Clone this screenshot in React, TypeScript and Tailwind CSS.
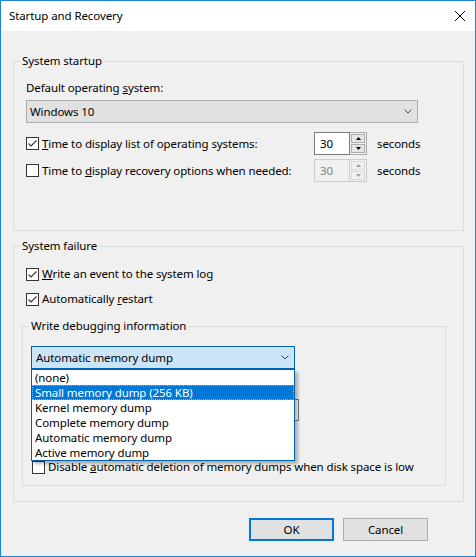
import React from "react";

const Check = ({ checked = false, className = "" }: { checked?: boolean; className?: string }) => (
  <span
    className={`flex h-[13px] w-[13px] shrink-0 items-center justify-center border border-[#333333] bg-white ${className}`}
  >
    {checked && (
      <svg width="11" height="11" viewBox="0 0 11 11">
        <path d="M1.5 5.5 L4 8 L9.5 2.5" fill="none" stroke="#333333" strokeWidth="1.1" />
      </svg>
    )}
  </span>
);

const Chevron = () => (
  <svg width="8" height="5" viewBox="0 0 8 5">
    <path d="M0.5 0.5 L4 4 L7.5 0.5" fill="none" stroke="#404040" strokeWidth="1" />
  </svg>
);

const Triangle = ({ up, disabled }: { up: boolean; disabled?: boolean }) => (
  <svg width="5" height="3" viewBox="0 0 5 3">
    <path d={up ? "M0 3 L2.5 0 L5 3Z" : "M0 0 L2.5 3 L5 0Z"} fill={disabled ? "#a0a0a0" : "#000000"} />
  </svg>
);

function Spin({ disabled = false }: { disabled?: boolean }) {
  return (
    <div className="flex h-[23px] w-[53px]">
      <div
        className={`flex w-[36px] items-center border pl-[5px] ${
          disabled ? "border-[#cccccc] bg-[#f0f0f0] text-[#838383]" : "border-[#7a7a7a] bg-white"
        }`}
      >
        30
      </div>
      <div
        className={`flex w-[17px] flex-col gap-[1px] border-y border-r p-[1px] ${
          disabled ? "border-[#cccccc]" : "border-[#adadad]"
        }`}
      >
        <div
          className={`flex flex-1 items-center justify-center border ${
            disabled ? "border-[#d9d9d9] bg-[#f0f0f0]" : "border-[#adadad] bg-[#e5e5e5]"
          }`}
        >
          <Triangle up disabled={disabled} />
        </div>
        <div
          className={`flex flex-1 items-center justify-center border ${
            disabled ? "border-[#d9d9d9] bg-[#f0f0f0]" : "border-[#adadad] bg-[#e5e5e5]"
          }`}
        >
          <Triangle up={false} disabled={disabled} />
        </div>
      </div>
    </div>
  );
}

const options = [
  "(none)",
  "Small memory dump (256 KB)",
  "Kernel memory dump",
  "Complete memory dump",
  "Automatic memory dump",
  "Active memory dump",
];

export default function App() {
  return (
    <div className="flex h-[557px] w-[476px] flex-col border border-[#1883d7] bg-[#f0f0f0] font-['Noto_Sans',sans-serif] text-[11.5px] leading-[16px] tracking-[-0.1px] text-black">
      {/* title bar */}
      <div className="flex h-[30px] shrink-0 items-center justify-between bg-white pl-[8px] pr-[10px]">
        <span>Startup and Recovery</span>
        <svg width="10" height="10" viewBox="0 0 10 10">
          <path d="M0 0 L10 10 M10 0 L0 10" stroke="#000000" strokeWidth="1" />
        </svg>
      </div>

      <div className="flex flex-col pl-[12px] pr-[11px]">
        {/* System startup */}
        <fieldset className="mt-[22px] min-w-0 border border-[#dcdcdc]">
          <legend className="ml-[6px] px-[2px]">System startup</legend>
          <div className="flex flex-col px-[12px] pt-[11px] pb-[48px]">
            <div className="h-[16px]">
              Default operating <u>s</u>ystem:
            </div>
            <div className="mt-[4px] flex h-[23px] w-[392px] items-center justify-between border border-[#adadad] bg-[#e1e1e1] pl-[3px] pr-[5px]">
              <span>Windows 10</span>
              <Chevron />
            </div>
            <div className="mt-[9px] flex h-[23px] items-center">
              <div className="flex w-[288px] items-center gap-[3px]">
                <Check checked />
                <span>
                  <u>T</u>ime to display list of operating systems:
                </span>
              </div>
              <Spin />
              <span className="ml-[10px]">seconds</span>
            </div>
            <div className="mt-[4px] flex h-[23px] items-center">
              <div className="flex w-[288px] items-center gap-[3px]">
                <Check />
                <span>
                  Time to <u>d</u>isplay recovery options when needed:
                </span>
              </div>
              <Spin disabled />
              <span className="ml-[10px]">seconds</span>
            </div>
          </div>
        </fieldset>

        {/* System failure */}
        <fieldset className="mt-[7px] min-w-0 border border-[#dcdcdc]">
          <legend className="ml-[6px] px-[2px]">System failure</legend>
          <div className="flex flex-col pt-[12px] pb-[15px]">
            <div className="flex h-[16px] items-center gap-[3px] pl-[12px]">
              <Check checked />
              <span>
                <u>W</u>rite an event to the system log
              </span>
            </div>
            <div className="mt-[9px] flex h-[16px] items-center gap-[3px] pl-[12px]">
              <Check checked />
              <span>
                Automatically <u>r</u>estart
              </span>
            </div>

            <fieldset className="mt-[11px] ml-[8px] mr-[17px] min-w-0 border border-[#dcdcdc]">
              <legend className="ml-[6px] px-[2px]">Write debugging information</legend>
              <div className="flex flex-col pl-[8px] pt-[12px] pb-[10px]">
                <div className="relative w-[264px]">
                  <div className="flex h-[23px] items-center justify-between border border-[#0060b8] bg-[#cce4f7] pl-[4px] pr-[5px]">
                    <span>Automatic memory dump</span>
                    <Chevron />
                  </div>
                  <div className="absolute left-0 top-[23px] z-10 flex w-[264px] flex-col border border-[#0063b1] bg-white shadow-[3px_3px_3px_rgba(0,0,0,0.28)]">
                    {options.map((o, i) => (
                      <div
                        key={o}
                        className={`h-[15px] pl-[3px] leading-[15px] ${
                          i === 1
                            ? "bg-[#0078d7] text-white outline-1 -outline-offset-1 outline-dotted outline-[#e8a050]"
                            : ""
                        }`}
                      >
                        {o}
                      </div>
                    ))}
                  </div>
                </div>
                {/* controls hidden behind the open list */}
                <div className="mt-[8px] h-[16px]" />
                <div className="mt-[6px] h-[22px] w-[268px] border border-[#7a7a7a] bg-white" />
                <div className="mt-[10px] flex h-[16px] items-center pl-[1px]">
                  <Check checked />
                </div>
                <div className="mt-[12px] flex h-[16px] items-center gap-[3px] pl-[1px]">
                  <Check />
                  <span>
                    Disable <u>a</u>utomatic deletion of memory dumps when disk space is low
                  </span>
                </div>
              </div>
            </fieldset>
          </div>
        </fieldset>
      </div>

      {/* buttons */}
      <div className="mt-[16px] flex justify-end gap-[9px] pr-[47px]">
        <button className="flex h-[23px] w-[85px] items-center justify-center border-2 border-[#0078d7] bg-[#e1e1e1]">
          OK
        </button>
        <button className="flex h-[23px] w-[85px] items-center justify-center border border-[#adadad] bg-[#e1e1e1]">
          Cancel
        </button>
      </div>
    </div>
  );
}
